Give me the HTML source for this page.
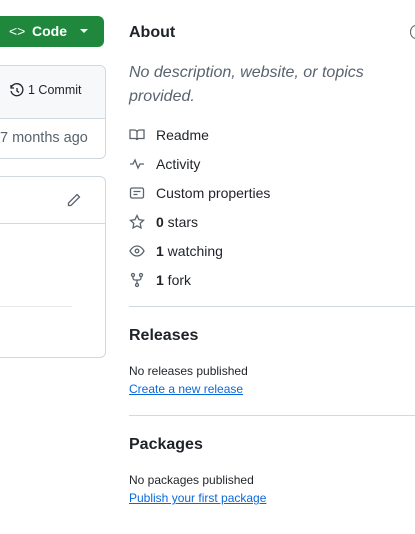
<!DOCTYPE html>
<html><head><style>
body{margin:0;width:415px;height:534px;overflow:hidden;background:#fff;font-family:"Liberation Sans",sans-serif;color:#1f2328;position:relative}
.a{position:absolute}
.btn{left:-8px;top:16px;width:112px;height:31px;background:#1f883d;border-radius:6px;color:#fff;font-weight:bold;font-size:14px}
.box{border:1px solid #d1d9e0;border-radius:6px;left:-10px;width:114px}
.h{font-size:16px;font-weight:bold;left:129px}
.li{left:129px;font-size:14px;display:flex;align-items:center;height:20px}
.li svg{width:16px;height:16px;margin-right:11px;fill:none;stroke:#59636e;stroke-width:1.3}
.sep{left:129px;width:290px;height:1px;background:#d1d9e0}
.sm{left:129px;font-size:12px}
.lk{color:#0969da;text-decoration:underline}
</style></head><body>
<div class="a btn"><span class="a" style="left:17px;top:7px;font-weight:normal">&lt;&gt;</span><span class="a" style="left:40px;top:7px">Code</span><span class="a" style="left:88px;top:13px;border-left:4px solid transparent;border-right:4px solid transparent;border-top:4px solid #fff"></span></div>
<div class="a box" style="top:65px;height:92px;overflow:hidden"><div style="background:#f6f8fa;height:52px;border-bottom:1px solid #d1d9e0"></div></div>
<svg class="a" style="left:9px;top:83px" width="16" height="16" viewBox="0 0 16 16" fill="none" stroke="#1f2328" stroke-width="1.3"><path d="M2.5 4A6 6 0 1 1 2 8"/><path d="M2 2v3h3"/><path d="M8 5v3l2 1.5"/></svg>
<div class="a" style="left:28px;top:83px;font-size:12.5px">1 Commit</div>
<div class="a" style="left:0;top:130px;font-size:14.5px;color:#59636e">7 months ago</div>
<div class="a box" style="top:176px;height:180px"></div>
<div class="a" style="left:0;top:223px;width:60px;height:1px;background:#d1d9e0"></div>
<div class="a" style="left:60px;top:223px;width:45px;height:1px;background:#d1d9e0"></div>
<div class="a" style="left:0;top:306px;width:72px;height:1px;background:#e6e9ec"></div>
<svg class="a" style="left:66px;top:192px" width="16" height="16" viewBox="0 0 16 16" fill="none" stroke="#59636e" stroke-width="1.3"><path d="M11 2.5l2.5 2.5L5 13.5H2.5V11z"/></svg>
<div class="a h" style="top:24px">About</div>
<div class="a" style="left:410px;top:25px;width:10px;height:12px;border:1.5px solid #59636e;border-radius:50%"></div>
<div class="a" style="left:129px;top:61px;font-size:16px;font-style:italic;color:#59636e;line-height:24px">No description, website, or topics<br>provided.</div>
<div class="a li" style="top:125px"><svg viewBox="0 0 16 16"><path d="M1 3h4.5A2.5 2.5 0 0 1 8 5.5V13a2 2 0 0 0-2-1.5H1zM15 3h-4.5A2.5 2.5 0 0 0 8 5.5V13a2 2 0 0 1 2-1.5h5z"/></svg>Readme</div>
<div class="a li" style="top:154px"><svg viewBox="0 0 16 16"><path d="M1 8h3l2-4 3 8 2-4h4"/></svg>Activity</div>
<div class="a li" style="top:183px"><svg viewBox="0 0 16 16"><rect x="1.5" y="3" width="13" height="10" rx="1.5"/><path d="M4.5 6.5h7M4.5 9.5h4"/></svg>Custom properties</div>
<div class="a li" style="top:212px"><svg viewBox="0 0 16 16"><path d="M8 1.5l2 4.2 4.5.6-3.3 3.1.8 4.5L8 11.8l-4 2.1.8-4.5L1.5 6.3 6 5.7z"/></svg><b>0</b>&nbsp;stars</div>
<div class="a li" style="top:241px"><svg viewBox="0 0 16 16"><path d="M1 8c2-3.5 4.5-5 7-5s5 1.5 7 5c-2 3.5-4.5 5-7 5S3 11.5 1 8z"/><circle cx="8" cy="8" r="1.8"/></svg><b>1</b>&nbsp;watching</div>
<div class="a li" style="top:270px"><svg viewBox="0 0 16 16"><circle cx="4" cy="3" r="1.5"/><circle cx="12" cy="3" r="1.5"/><circle cx="8" cy="13" r="1.5"/><path d="M4 4.5v1.5a2 2 0 0 0 2 2h4a2 2 0 0 0 2-2V4.5M8 8v3.5"/></svg><b>1</b>&nbsp;fork</div>
<div class="a sep" style="top:306px"></div>
<div class="a h" style="top:327px">Releases</div>
<div class="a sm" style="top:364px">No releases published</div>
<div class="a sm lk" style="top:382px">Create a new release</div>
<div class="a sep" style="top:415px"></div>
<div class="a h" style="top:436px">Packages</div>
<div class="a sm" style="top:473px">No packages published</div>
<div class="a sm lk" style="top:491px">Publish your first package</div>
</body></html>
